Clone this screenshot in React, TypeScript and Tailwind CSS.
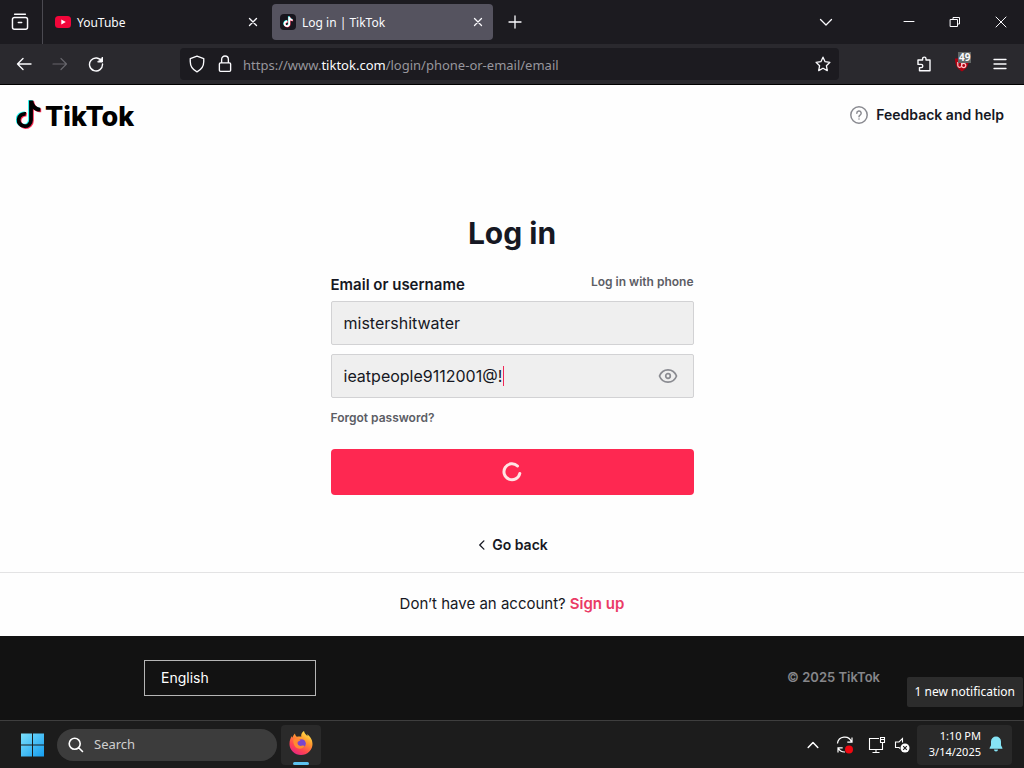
import React from "react";

const NOTE =
  "M12.525.02c1.31-.02 2.61-.01 3.91-.02.08 1.53.63 3.09 1.75 4.17 1.12 1.11 2.7 1.62 4.24 1.79v4.03c-1.44-.05-2.89-.35-4.2-.97-.57-.26-1.1-.59-1.62-.93-.01 2.92.01 5.84-.02 8.75-.08 1.4-.54 2.79-1.35 3.94-1.31 1.92-3.58 3.17-5.91 3.21-1.43.08-2.86-.31-4.08-1.03-2.02-1.19-3.44-3.37-3.65-5.71-.02-.5-.03-1-.01-1.49.18-1.9 1.12-3.72 2.58-4.96 1.66-1.44 3.98-2.13 6.15-1.72.02 1.48-.04 2.96-.04 4.44-.99-.32-2.15-.23-3.02.37-.63.41-1.11 1.04-1.36 1.75-.21.51-.15 1.07-.14 1.61.24 1.64 1.82 3.02 3.5 2.87 1.12-.01 2.19-.66 2.77-1.61.19-.33.4-.67.41-1.06.1-1.79.06-3.57.07-5.36.01-4.03-.01-8.05.02-12.07z";

type IconProps = { className?: string; width?: number; children: React.ReactNode };

function Icon({ className = "size-4", width = 1.2, children }: IconProps) {
  return (
    <svg
      aria-hidden="true"
      viewBox="0 0 16 16"
      className={className}
      fill="none"
      stroke="currentColor"
      strokeWidth={width}
      strokeLinecap="round"
      strokeLinejoin="round"
    >
      {children}
    </svg>
  );
}

function LogoNote({ color, transform }: { color: string; transform?: string }) {
  return (
    <g transform={transform}>
      <path d="M15 2v19a6.200 6.200 0 1 1-5.200-6.100" fill="none" stroke={color} strokeWidth="3.800" />
      <path d="M13.100 1.500h4.200c.3 3.800 2.900 6.900 7 7.300v3.700c-2.900 0-5.400-1-7.400-2.600z" fill={color} />
    </g>
  );
}

function TabStrip() {
  return (
    <div className="flex h-11 items-center bg-[#1c1b20]">
      <button aria-label="Firefox View" className="flex h-full w-[43px] items-center justify-center border-r border-[#4b4a51] pr-0.5">
        <Icon className="size-[18px]" width={1.3}>
          <path d="M3.2 1.2h9.6M3 4h10a1.7 1.7 0 0 1 1.7 1.7v7A1.7 1.7 0 0 1 13 14.400H3a1.700 1.700 0 0 1-1.700-1.700v-7A1.700 1.700 0 0 1 3 4zM6.500 8.500h3" />
        </Icon>
      </button>
      <div className="flex h-9 w-[229px] items-center gap-1.5 pl-3 pr-3">
        <svg aria-hidden="true" viewBox="0 0 16 12" className="h-3 w-4">
          <rect width="16" height="12" rx="3.500" fill="#f2063a" />
          <path d="M6.300 3.400v5.200L10.800 6z" fill="#fff" />
        </svg>
        <span className="flex-1 pt-0.5 text-xs">YouTube</span>
        <button aria-label="Close YouTube tab">
          <Icon className="size-3.5" width={1.5}><path d="M4 4l8 8M12 4l-8 8" /></Icon>
        </button>
      </div>
      <div className="flex h-9 w-[221px] items-center gap-1.5 rounded bg-[#55535f] pl-2 pr-2">
        <svg aria-hidden="true" viewBox="0 0 16 16" className="size-4">
          <rect width="16" height="16" rx="4" fill="#17151d" />
          <g transform="translate(3 2.700) scale(.43)">
            <path d={NOTE} fill="#25f4ee" transform="translate(-1 -1)" />
            <path d={NOTE} fill="#fe2c55" transform="translate(1 1)" />
            <path d={NOTE} fill="#fff" />
          </g>
        </svg>
        <span className="flex-1 pt-0.5 text-xs">Log in | TikTok</span>
        <button aria-label="Close Log in tab">
          <Icon className="size-3.5" width={1.5}><path d="M4 4l8 8M12 4l-8 8" /></Icon>
        </button>
      </div>
      <button aria-label="New tab" className="ml-3.5">
        <Icon width={1.3}><path d="M8 2v12M2 8h12" /></Icon>
      </button>
      <div className="ml-auto flex items-center">
        <button aria-label="List all tabs" className="mr-[46px] flex w-7 justify-center">
          <Icon width={1.300}><path d="M2.500 5.500L8 11l5.500-5.500" /></Icon>
        </button>
        <button aria-label="Minimize" className="flex w-[46px] justify-center">
          <Icon width={1}><path d="M3 7.500h10" /></Icon>
        </button>
        <button aria-label="Restore" className="flex w-[46px] justify-center">
          <Icon width={1}><path d="M3.500 5.500h7v7h-7zM6 5.500V3.500h6.500V10H10.500" /></Icon>
        </button>
        <button aria-label="Close window" className="flex w-[46px] justify-center">
          <Icon width={1}><path d="M3 3l10 10M13 3L3 13" /></Icon>
        </button>
      </div>
    </div>
  );
}

function Toolbar() {
  return (
    <div className="flex h-[41px] items-center border-b border-black bg-[#2a292e] pl-4 pr-4">
      <button aria-label="Back">
        <Icon width={1.400}><path d="M15 8H1.500M7 2.500L1.500 8 7 13.500" /></Icon>
      </button>
      <button aria-label="Forward" className="ml-5 text-[#66656b]">
        <Icon width={1.200}><path d="M1 8h13.500M9 2.500L14.500 8 9 13.500" /></Icon>
      </button>
      <button aria-label="Reload" className="ml-5">
        <Icon width={1.400}>
          <path d="M13.800 5.500A6.500 6.500 0 1 0 14.500 8" />
          <path d="M14.500 1.500V6H10z" fill="currentColor" strokeWidth={1} />
        </Icon>
      </button>
      <div className="ml-[76px] flex h-8 flex-1 items-center rounded bg-[#1c1b20] px-2">
        <Icon className="size-[18px]" width={1.200}>
          <path d="M8 1l6 2.200v2.600c0 4.200-2.200 7.300-6 9.200-3.800-1.900-6-5-6-9.200V3.200z" />
        </Icon>
        <Icon className="ml-2.5 size-[18px]" width={1.200}>
          <path d="M4 7h8a1 1 0 0 1 1 1v5.500a1 1 0 0 1-1 1H4a1 1 0 0 1-1-1V8a1 1 0 0 1 1-1zM5 7V3.900a3 3 0 0 1 6 0V7" />
        </Icon>
        <span className="ml-[9px] flex-1 pt-[3px] text-[13px] text-[#97969c]">
          https://www.<span className="text-[#fbfbfe]">tiktok.com</span>/login/phone-or-email/email
        </span>
        <button aria-label="Bookmark this page">
          <Icon className="size-4" width={1.300}>
            <path d="M8 1.200l2.100 4.500 4.800.6-3.500 3.400.9 4.900L8 12.200l-4.300 2.400.9-4.900L1.100 6.300l4.800-.6z" />
          </Icon>
        </button>
      </div>
      <button aria-label="Extensions" className="ml-[77px]">
        <Icon className="size-4" width={1.400}>
          <path d="M2 4h4.600V2.800a1.700 1.700 0 0 1 3.400 0V4h4v10.800H3.500v-3.200h1.700a1.600 1.600 0 0 0 0-3.200H2z" />
        </Icon>
      </button>
      <button aria-label="uBlock Origin, 49 blocked" className="relative ml-[22px]">
        <svg aria-hidden="true" viewBox="0 0 16 16" className="size-4">
          <path d="M8 .5c2 1.500 4 2 7 2 0 6-2 10-7 13-5-3-7-7-7-13 3 0 5-.5 7-2z" fill="#b00010" />
          <path d="M3.800 6v3.500a1.900 1.900 0 0 0 3.800 0V6M7.600 9.500a2.100 2.100 0 1 0 4.200 0 2.100 2.100 0 0 0-4.200 0z" fill="none" stroke="#ffc4c8" strokeWidth="1.200" />
        </svg>
        <span className="absolute -top-1 left-1 bg-[#626766] px-px text-[10px] leading-[11px] font-bold">49</span>
      </button>
      <button aria-label="Open application menu" className="ml-[22px]">
        <Icon width={1.300}><path d="M2 3.500h12M2 8h12M2 12.500h12" /></Icon>
      </button>
    </div>
  );
}

function SiteHeader() {
  return (
    <header className="flex h-[60px] items-center justify-between pl-4 pr-5">
      <a href="#home" aria-label="TikTok home" className="flex items-center gap-[3px]">
        <svg aria-hidden="true" viewBox="0 1 26 30" className="h-[30px] w-[26px]">
          <LogoNote color="#25f4ee" transform="translate(-1 -.5)" />
          <LogoNote color="#fe2c55" transform="translate(.9 .8)" />
          <LogoNote color="#010101" />
        </svg>
        <span className="pt-1 text-[27px] leading-8 font-extrabold text-black">TikTok</span>
      </a>
      <a href="#help" className="flex items-center gap-2 text-sm font-semibold">
        <svg aria-hidden="true" viewBox="0 0 18 18" className="size-[18px]" fill="none" stroke="#8a8b91" strokeWidth="1.500" strokeLinecap="round">
          <circle cx="9" cy="9" r="8.200" />
          <path d="M6.800 7.200a2.200 2.200 0 1 1 3.300 1.900c-.7.400-1.100.800-1.100 1.600M9 13v.1" />
        </svg>
        Feedback and help
      </a>
    </header>
  );
}

function LoginForm() {
  const field = "h-11 w-full rounded-xs border border-[#d2d2d4] bg-[#efefef] px-3 text-base text-[#161823] outline-none";
  return (
    <main className="mx-auto w-[363px] flex-1 pt-[66px]">
      <h1 className="text-center text-[30px] leading-[44px] font-bold">Log in</h1>
      <form onSubmit={(e) => e.preventDefault()}>
        <div className="mt-4 flex items-start justify-between">
          <label htmlFor="user" className="pt-0.5 pb-1 text-[15px] leading-6 font-semibold">Email or username</label>
          <a href="#phone" className="text-xs leading-[22px] font-semibold text-[#5c5d65]">Log in with phone</a>
        </div>
        <input id="user" defaultValue="mistershitwater" className={field} />
        <div className="relative mt-[9px]">
          <input id="password" aria-label="Password" defaultValue="ieatpeople9112001@!" className={field} />
          <span className="absolute top-3 left-[172px] h-5 w-px bg-[#f02858]" />
          <button type="button" aria-label="Hide password" className="absolute top-3 right-4 text-[#8a8b91]">
            <svg aria-hidden="true" viewBox="0 0 20 20" className="size-5" fill="none" stroke="currentColor" strokeWidth="1.700">
              <path d="M1.500 10C3 6 6 3.800 10 3.800S17 6 18.500 10C17 14 14 16.200 10 16.200S3 14 1.500 10z" />
              <circle cx="10" cy="10" r="2.300" />
            </svg>
          </button>
        </div>
        <a href="#forgot" className="mt-2.5 block text-xs leading-5 font-semibold text-[#5c5d65]">Forgot password?</a>
        <button type="submit" aria-label="Logging in" className="mt-[21px] flex h-[46px] w-full items-center justify-center rounded bg-[#fe2851]">
          <svg aria-hidden="true" viewBox="0 0 20 20" className="size-5" fill="none" stroke="#ffe4e4" strokeWidth="3" strokeLinecap="round">
            <path d="M15.500 4A8 8 0 1 0 17.800 11.500" />
          </svg>
        </button>
      </form>
    </main>
  );
}

function Footer() {
  return (
    <footer>
      <div className="flex justify-center pb-[17px]">
        <button className="flex items-center gap-1 text-sm leading-5 font-semibold">
          <Icon className="size-3" width={1.800}><path d="M10.500 2.500L5 8l5.500 5.500" /></Icon>
          Go back
        </button>
      </div>
      <p className="flex h-16 items-center justify-center gap-1 border-t border-[#e3e3e4] text-[15px]">
        Don’t have an account? <a href="#signup" className="font-semibold text-[#ea3a66]">Sign up</a>
      </p>
      <div className="flex h-[84px] items-center justify-between bg-[#121212] px-36">
        <select aria-label="Language" className="h-9 w-[172px] appearance-none border border-[#b5b5b5] bg-[#121212] px-4 text-sm text-white">
          <option>English</option>
        </select>
        <span className="text-[13px] font-semibold text-[#86868a]">© 2025 TikTok</span>
      </div>
    </footer>
  );
}

function Taskbar() {
  return (
    <div className="relative flex h-12 items-center border-t border-[#3e3e3e] bg-[#1c1c1c] pr-3 pl-5 font-['Noto_Sans',sans-serif] text-white">
      <button aria-label="Start">
        <svg aria-hidden="true" viewBox="0 0 24 24" className="size-6">
          <defs>
            <linearGradient id="win" x1="0" y1="0" x2="1" y2="1">
              <stop offset="0" stopColor="#7ce0fb" />
              <stop offset="1" stopColor="#149df0" />
            </linearGradient>
          </defs>
          <path fill="url(#win)" d="M1 .5h11V11.500H1zM13 .5h11V11.500H13zM1 12.500h11V23.500H1zM13 12.500h11V23.500H13z" />
        </svg>
      </button>
      <label className="ml-[13px] flex h-8 w-[220px] items-center gap-2.5 rounded-full bg-[#3c3c3c] pl-[11px]">
        <Icon className="size-4" width={1.600}><path d="M12.200 6.800a5.500 5.500 0 1 1-11 0 5.500 5.500 0 0 1 11 0zM10.700 10.700L14.500 14.500" /></Icon>
        <input aria-label="Search" placeholder="Search" className="w-40 bg-transparent text-[13px] outline-none placeholder:text-[#cfcfcf]" />
      </label>
      <button aria-label="Firefox" className="relative ml-1 flex size-10 items-center justify-center rounded bg-[#2a2a2a] pb-1">
        <svg aria-hidden="true" viewBox="0 0 24 24" className="size-6">
          <defs>
            <linearGradient id="fox" x1=".8" y1="0" x2=".2" y2="1">
              <stop offset="0" stopColor="#fff04f" />
              <stop offset=".35" stopColor="#ff9a2e" />
              <stop offset=".7" stopColor="#ff4550" />
              <stop offset="1" stopColor="#e3208a" />
            </linearGradient>
          </defs>
          <path fill="url(#fox)" d="M15 0c.5 2.500 2 3.700 3.500 5.200 0-.8-.2-1.400-.4-2C21 5 23.500 8.500 23.500 13A11.500 11 0 0 1 .5 13C.5 9.500 1.500 7 3 5c0 .8.100 1.300.400 1.800C4 4.700 5 3.500 6 2.500c.100 1.400.700 2.500 2 3.300 1.500-.5 3-.5 4.300 0C11.700 3.500 13 1 15 0z" />
          <circle cx="12.500" cy="12.500" r="4.300" fill="#7a45cf" />
          <path fill="#ff8a31" d="M4.500 8.500c2-1 4.500-1 7 1-1.200.2-1.500 1-3 1.300-.5 2.700 1.700 4.700 4 4 1.500-.5 2.500-.5 3.200.2-2 3.500-8 3.500-10 0C4.500 13 4 10.500 4.500 8.500z" />
        </svg>
        <span className="absolute bottom-0 left-3 h-[3px] w-4 rounded-full bg-[#5cc3f0]" />
      </button>
      <button aria-label="Show hidden icons" className="ml-auto">
        <Icon className="size-4" width={1.500}><path d="M3.200 10.500L8 5.500l4.800 5" /></Icon>
      </button>
      <button aria-label="Updates available" className="ml-[15px]">
        <svg aria-hidden="true" viewBox="0 0 18 18" className="size-[18px]" fill="none" stroke="#fff" strokeWidth="1.200">
          <path d="M1.500 7.500A7.200 7.200 0 0 1 15.500 6M16 1.500v4.700h-4.700M2 16.500v-4.700h4.700M2.200 12A7.200 7.200 0 0 0 9 16" />
          <circle cx="13" cy="13.500" r="4" fill="#f00810" stroke="none" />
        </svg>
      </button>
      <button aria-label="Network" className="ml-3.5">
        <svg aria-hidden="true" viewBox="0 0 18 18" className="size-[18px]" fill="none" stroke="#fff" strokeWidth="1.100">
          <path d="M11 2.500H1.500v11h13V8.500M4.500 16.500h7M8 13.500v3M12.500 1.500h4v5h-4zM14.500 6.500v2.500M12.500 3.500h4" />
        </svg>
      </button>
      <button aria-label="Volume muted" className="ml-2">
        <svg aria-hidden="true" viewBox="0 0 16 16" className="size-4" fill="none" stroke="#fff" strokeWidth="1.100">
          <path d="M8.500 5.500v-4L5 5H1.500v5.500H5l1 1" />
          <circle cx="11" cy="11" r="4.500" fill="#fff" stroke="none" />
          <path d="M9.200 9.200l3.600 3.600M12.800 9.200l-3.600 3.600" stroke="#1c1c1c" />
        </svg>
      </button>
      <button aria-label="Notifications" className="ml-[7px] flex h-10 w-[95px] items-center justify-end gap-2 rounded bg-[#292929] pr-[9px] pb-0.5 text-right text-[11px] leading-4">
        <span>1:10 PM<br />3/14/2025</span>
        <svg aria-hidden="true" viewBox="0 0 14 16" className="h-4 w-3.5" fill="#86e4f5">
          <path d="M7 .5A5 5 0 0 0 2 5.500v3.700L.6 12v.8h12.800V12L12 9.200V5.500A5 5 0 0 0 7 .5zM5 13.500a2 2 0 0 0 4 0z" />
        </svg>
      </button>
      <div role="tooltip" className="absolute right-px bottom-[61px] rounded-xs bg-[#2c2c2c] px-2 py-1.5 text-xs leading-[18px]">1 new notification</div>
    </div>
  );
}

export default function App() {
  return (
    <div className="flex min-h-screen flex-col bg-white">
      <div className="font-['Noto_Sans',sans-serif] text-[#fbfbfe]">
        <TabStrip />
        <Toolbar />
      </div>
      <div className="flex flex-1 flex-col bg-[#fefefe] font-[Inter,sans-serif] text-[#161823]">
        <SiteHeader />
        <LoginForm />
        <Footer />
      </div>
      <Taskbar />
    </div>
  );
}
